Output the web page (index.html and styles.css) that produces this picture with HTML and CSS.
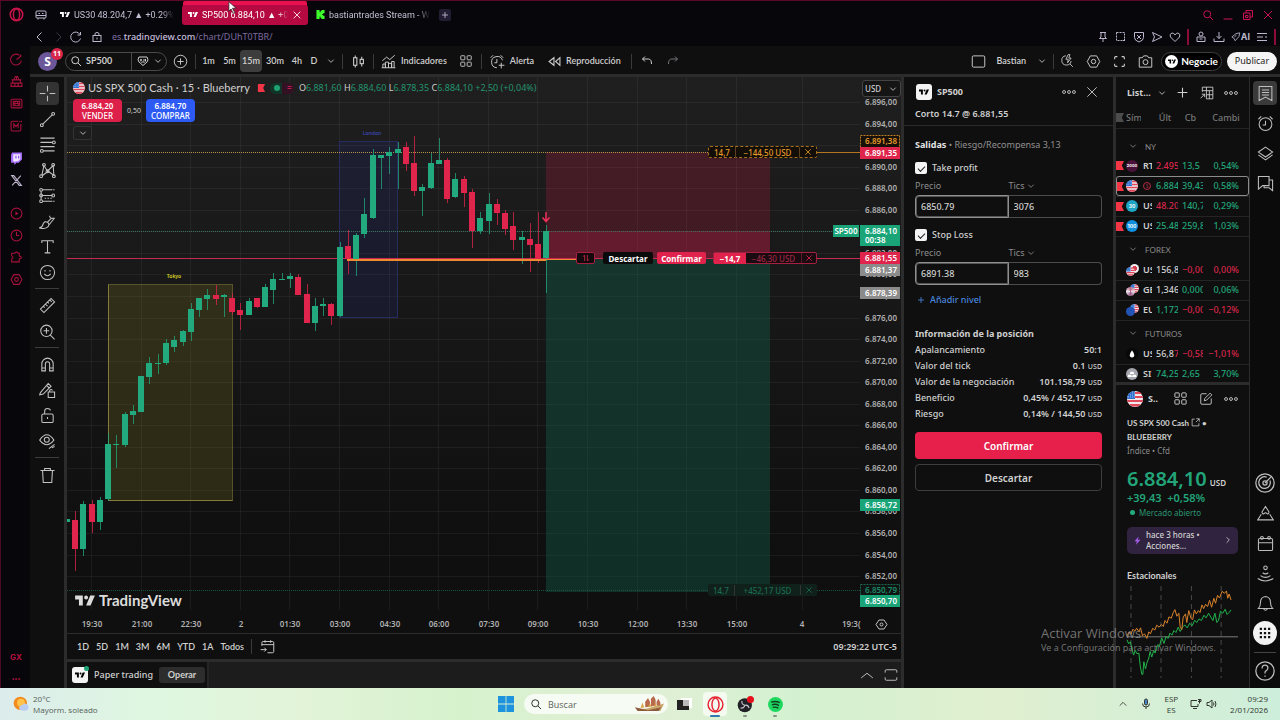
FILE: index.html
```html
<!DOCTYPE html>
<html lang="es">
<head>
<meta charset="utf-8">
<title>SP500 6.884,10</title>
<link rel="stylesheet" href="styles.css">
</head>
<body>
<svg class="defs" aria-hidden="true">
  <symbol id="tv" viewBox="0 0 36 20"><path fill="currentColor" d="M0 1h14v18H7V8H0zM28 19h-8L27.500 1H36zM16.500 4.500a3.500 3.500 0 1 0 7 0a3.500 3.500 0 1 0-7 0"/></symbol>
  <symbol id="chev" viewBox="0 0 24 24"><path d="M4 8l8 8 8-8"/></symbol>
  <symbol id="search" viewBox="0 0 24 24"><circle cx="10.500" cy="10.500" r="7"/><path d="M16 16l6 6"/></symbol>
  <symbol id="plus" viewBox="0 0 24 24"><path d="M12 3v18M3 12h18"/></symbol>
  <symbol id="pluscircle" viewBox="0 0 24 24"><circle cx="12" cy="12" r="10"/><path d="M12 7v10M7 12h10"/></symbol>
  <symbol id="close" viewBox="0 0 24 24"><path d="M4 4l16 16M20 4L4 20"/></symbol>
  <symbol id="dots" viewBox="0 0 24 24"><circle cx="3.500" cy="12" r="2.500"/><circle cx="12" cy="12" r="2.500"/><circle cx="20.500" cy="12" r="2.500"/></symbol>
  <symbol id="grid4" viewBox="0 0 24 24"><rect x="3" y="3" width="7" height="7" rx="1"/><rect x="14" y="3" width="7" height="7" rx="1"/><rect x="3" y="14" width="7" height="7" rx="1"/><rect x="14" y="14" width="7" height="7" rx="1"/></symbol>
  <symbol id="hex" viewBox="0 0 24 24"><path d="M7 3h10l5 9-5 9H7l-5-9z"/><circle cx="12" cy="12" r="3.500"/></symbol>
  <symbol id="full" viewBox="0 0 24 24"><path d="M3 8V5q0-2 2-2h3M16 3h3q2 0 2 2v3M21 16v3q0 2-2 2h-3M8 21H5q-2 0-2-2v-3"/></symbol>
  <symbol id="smile" viewBox="0 0 24 24"><circle cx="12" cy="12" r="10"/><path d="M7.500 14q4.500 5 9 0M8.500 8.500v2M15.500 8.500v2"/></symbol>
  <symbol id="alarm" viewBox="0 0 24 24"><circle cx="12" cy="13" r="9"/><path d="M12 8v6H8M2 6l4-4M22 6l-4-4"/></symbol>
  <symbol id="cal" viewBox="0 0 24 24"><rect x="2" y="5" width="20" height="17" rx="2"/><path d="M2 11h20M8 5h8"/><circle cx="7" cy="4" r="2"/><circle cx="17" cy="4" r="2"/></symbol>
  <symbol id="opera" viewBox="0 0 24 24"><circle cx="12" cy="12" r="10"/><ellipse cx="12" cy="12" rx="5" ry="9"/></symbol>
  <symbol id="flag" viewBox="0 0 9 10"><path fill="#f23645" d="M0 0h9L6.500 5 9 10H0z"/></symbol>
  <symbol id="usa" viewBox="0 0 16 16"><circle cx="8" cy="8" r="8" fill="#f3e9ec"/><path fill="#e0485b" d="M8 1h5l1.500 2H8zM8 5h7.500l.5 2H8zM0 9h16l-.6 2H.6zM2 13h12l-3 2.500H5z"/><path fill="#2d6fd0" d="M8 0v8H0a8 8 0 0 1 8-8"/><path stroke="#cfe2ff" stroke-width=".7" stroke-dasharray="1 1" d="M3 4h5M1 6h7M5 2h3"/></symbol>
</svg>

<main class="browser">
  <nav class="gx" aria-label="Opera GX">
    <div class="gx-home"><svg class="i i15 thick"><use href="#opera"/></svg></div>
    <div class="gx-group">
      <svg class="i i13" viewBox="0 0 24 24"><path d="M17 4a10 10 0 1 0 4 10M12 12l8-6M18 3l3 3"/></svg>
      <svg class="i i13" viewBox="0 0 24 24"><path d="M7 9l3-6h4l3 6M3 9h18M5 9v6M19 9v6M2 15h20v6H2zM9 15v6M15 15v6M12 3v6"/></svg>
      <svg class="i i13" viewBox="0 0 24 24"><rect x="2" y="4" width="20" height="16" rx="2"/><path d="M6 8h12v8H6zM9 8v8M13 8l3 8M6 12h12"/></svg>
      <svg class="i i13" viewBox="0 0 24 24"><path d="M20 9v11q0 2-2 2H4q-2 0-2-2V6q0-2 2-2h11M7 17V9l4 5 4-5v8M18 3v3M21 3v3"/></svg>
    </div>
    <div class="gx-group gap">
      <svg class="i i13" viewBox="0 0 24 24"><path fill="#a970ff" stroke="none" d="M4 1h18v13l-6 6h-4l-4 4v-4H2V5z"/><path fill="#f0e6ff" stroke="none" d="M6 4h13v9l-4 4h-4l-3 2v-2H6z"/><path stroke="#8040e0" d="M11 7v5M16 7v5"/></svg>
      <svg class="i i13 pale" viewBox="0 0 24 24"><path d="M3 3h4l14 18h-4zM20 3L4 21"/></svg>
    </div>
    <div class="gx-group gap">
      <svg class="i i13" viewBox="0 0 24 24"><circle cx="12" cy="12" r="10"/><path fill="currentColor" d="M11 10l3 2-3 2z"/></svg>
      <svg class="i i13" viewBox="0 0 24 24"><circle cx="12" cy="12" r="10"/><path d="M12 5v7h5"/></svg>
      <svg class="i i13" viewBox="0 0 24 24"><path d="M3 4h6q3-4 6 0h2v5q8 3 0 6v5H3v-5q5-3 0-6z"/></svg>
      <svg class="i i13"><use href="#hex"/></svg>
    </div>
    <div class="gx-foot"><span>GX</span><span>•••</span></div>
  </nav>

  <section class="window">
    <header class="tabs">
      <svg class="i i12 pale" viewBox="0 0 24 24"><rect x="2" y="4" width="20" height="14" rx="2"/><path d="M2 13h20M6 18v3M18 18v3M7 9h3M14 9h3"/></svg>
      <button class="tab"><svg class="fav"><use href="#tv"/></svg><span>US30 48.204,7 ▲ +0.29%</span></button>
      <button class="tab active"><svg class="fav"><use href="#tv"/></svg><span>SP500 6.884,10 ▲ +0.04%</span><svg class="i i10"><use href="#close"/></svg></button>
      <button class="tab kick"><svg class="fav" viewBox="0 0 20 20"><path fill="#3dfc2c" d="M1 0h7v5h2V2h2V0h7v7h-3v2h-2v2h2v2h3v7h-7v-2h-2v-3H8v5H1z"/></svg><span>bastiantrades Stream - Watch</span></button>
      <button class="newtab" aria-label="Nueva pestaña"><svg class="i i8 thick"><use href="#plus"/></svg></button>
      <div class="wincontrols">
        <svg class="i i12 thick"><use href="#search"/></svg>
        <svg class="i i12 thick" viewBox="0 0 24 24"><path d="M3 20h18"/></svg>
        <svg class="i i12 thick" viewBox="0 0 24 24"><path d="M3 8h13v13H3zM8 8V3h13v13h-5M7 13h5v4H7z"/></svg>
        <svg class="i i12 thick"><use href="#close"/></svg>
      </div>
    </header>
    <div class="address">
      <svg class="i i12 pale thick" viewBox="0 0 24 24"><path d="M15 3l-9 9 9 9"/></svg>
      <svg class="i i12 dim" viewBox="0 0 24 24"><path d="M9 3l9 9-9 9"/></svg>
      <svg class="i i12 pale thick" viewBox="0 0 24 24"><path d="M20 7a10 10 0 1 0 1 8M21 2v6h-6"/></svg>
      <svg class="i i12 pale lock" viewBox="0 0 24 24"><rect x="4" y="9" width="16" height="12"/><path d="M8 9V6q0-3 4-3t4 3v3M12 13v4"/></svg>
      <a class="url" href="#">es.<b>tradingview.com</b>/chart/DUhT0TBR/</a>
      <div class="addr-icons">
        <svg class="i i12" viewBox="0 0 24 24"><path d="M6 3h12M8 3v9l-3 3h14l-3-3V3M12 15v7"/></svg>
        <svg class="i i12" viewBox="0 0 24 24"><path stroke-dasharray="4 2" d="M3 3h16v16H3zM19 16v6M16 19h6"/></svg>
        <svg class="i i12" viewBox="0 0 24 24"><path d="M3 3h18v10q0 6-9 9-9-3-9-9zM8 8l8 8M16 8l-8 8"/></svg>
        <svg class="i i12" viewBox="0 0 24 24"><path d="M3 3l19 9-19 9 4-9z"/></svg>
        <svg class="i i12" viewBox="0 0 24 24"><path d="M12 21L3 12q-3-6 3-8 4 0 6 4 2-4 6-4 6 2 3 8z"/></svg>
        <i class="bar"></i>
        <svg class="i i12" viewBox="0 0 24 24"><circle cx="12" cy="6" r="4"/><path d="M4 12h16v9H4zM9 16h6"/></svg>
        <svg class="i i12" viewBox="0 0 24 24"><path d="M12 2v13M7 10l5 5 5-5M2 15v6h20v-6"/></svg>
        <span class="ai"><svg class="i i10" viewBox="0 0 24 24"><path d="M2 12l10-8 9-2-2 9-9 10-3-6zM8 12l5-4"/></svg>AI</span>
        <svg class="i i12 thick" viewBox="0 0 24 24"><path d="M2 5h20M2 12h12M18 12h4M2 19h20"/></svg>
        <i class="bar"></i>
      </div>
    </div>

    <div class="toolbar">
      <div class="avatar">S<span class="badge">11</span></div>
      <div class="pill">
        <button class="sym"><svg class="i i12"><use href="#search"/></svg>SP500</button>
        <button class="cmp" aria-label="Comparar"><svg class="i i12" viewBox="0 0 24 24"><path d="M4 4h16q4 6 0 10l-8 7-8-7q-4-4 0-10zM8 8v5M6 10h4M14 8v5M17 8v5M9 16l3-3 3 3"/></svg><svg class="i i8"><use href="#chev"/></svg></button>
      </div>
      <button class="tb w26" aria-label="Añadir"><svg class="i i15"><use href="#pluscircle"/></svg></button>
      <i class="sep"></i>
      <button class="tb w20">1m</button><button class="tb w20">5m</button><button class="tb w22 on">15m</button><button class="tb w26">30m</button><button class="tb w18">4h</button><button class="tb w15">D</button><button class="tb w18" aria-label="Intervalos"><svg class="i i8"><use href="#chev"/></svg></button>
      <i class="sep"></i>
      <button class="tb w26" aria-label="Velas"><svg class="i i13" viewBox="0 0 24 24"><rect x="3" y="5" width="6" height="14"/><path d="M6 1v4M6 19v4M18 3v5M18 16v5"/><rect x="15" y="8" width="6" height="8"/></svg></button>
      <i class="sep"></i>
      <button class="tb ind"><svg class="i i15" viewBox="0 0 24 24"><path d="M3 22v-6h4v6M7 22v-9h5v9M12 22v-7h5v7M17 22v-10h4v10M2 11l7-6 5 4 8-7M1 22h22"/></svg>Indicadores</button>
      <button class="tb w26" aria-label="Plantillas"><svg class="i i14"><use href="#grid4"/></svg></button>
      <i class="sep"></i>
      <button class="tb ale"><svg class="i i15" viewBox="0 0 24 24"><path d="M20 10a9 9 0 1 0-9 12M11 8v6H7M1 6l4-4M21 6l-4-4M18 14v9M14 18h9"/></svg>Alerta</button>
      <button class="tb rep"><svg class="i i13" viewBox="0 0 24 24"><path d="M11 5v14L2 12zM22 5v14l-8-7z"/></svg>Reproducción</button>
      <i class="sep"></i>
      <button class="tb w26" aria-label="Deshacer"><svg class="i i12" viewBox="0 0 24 24"><path d="M8 3L3 8l5 5M3 8h12q6 0 6 10"/></svg></button>
      <button class="tb w26 dim" aria-label="Rehacer"><svg class="i i12" viewBox="0 0 24 24"><path d="M16 3l5 5-5 5M21 8H9q-6 0-6 10"/></svg></button>
      <div class="tb-right">
        <button class="tb w26" aria-label="Diseño"><svg class="i i15" viewBox="0 0 24 24"><rect x="2" y="3" width="20" height="18" rx="2"/></svg></button>
        <button class="tb bas">Bastian<svg class="i i8"><use href="#chev"/></svg></button>
        <i class="sep"></i>
        <button class="tb w26" aria-label="Búsqueda rápida"><svg class="i i14" viewBox="0 0 24 24"><path d="M10 3a8 8 0 1 0 9 9M17 17l5 5M14 1l-4 8h4l-1 6 6-8h-4l2-6z"/></svg></button>
        <button class="tb w26" aria-label="Ajustes"><svg class="i i15"><use href="#hex"/></svg></button>
        <button class="tb w26" aria-label="Pantalla completa"><svg class="i i13"><use href="#full"/></svg></button>
        <button class="tb w26" aria-label="Captura"><svg class="i i15" viewBox="0 0 24 24"><path d="M2 6h5l2-3h6l2 3h5v15H2z"/><circle cx="12" cy="13" r="4"/></svg></button>
        <button class="negocie"><span class="disc"><svg><use href="#tv"/></svg></span>Negocie</button>
        <button class="publicar">Publicar</button>
      </div>
    </div>

    <div class="workspace">
      <aside class="tools">
        <div class="tg g8">
          <button class="on" aria-label="Cruz"><svg class="i i18" viewBox="0 0 24 24"><path d="M12 1v8M12 15v8M1 12h8M15 12h8"/></svg></button>
          <button aria-label="Línea"><svg class="i i18" viewBox="0 0 24 24"><path d="M5 19L19 5"/><circle cx="4" cy="20" r="2"/><circle cx="20" cy="4" r="2"/></svg></button>
          <button aria-label="Fibonacci"><svg class="i i18" viewBox="0 0 24 24"><path d="M2 3h20M2 9h17M2 15h20M6 21h16"/><circle cx="21" cy="9" r="2"/><circle cx="4" cy="21" r="2"/></svg></button>
          <button aria-label="Patrones"><svg class="i i18" viewBox="0 0 24 24"><path d="M4 19L7 5l5 8 8-8 1 14-8-6-8 6"/><circle cx="3" cy="20" r="2"/><circle cx="7" cy="4" r="2"/><circle cx="12" cy="13" r="2"/><circle cx="20" cy="4" r="2"/><circle cx="21" cy="20" r="2"/></svg></button>
          <button aria-label="Previsión"><svg class="i i18" viewBox="0 0 24 24"><path d="M5 4h17M5 12h14M5 20h17M3 6v12" stroke-dasharray="14 1"/><path stroke-dasharray="2 2" d="M8 16h12"/><circle cx="3" cy="4" r="2"/><circle cx="3" cy="12" r="2"/><circle cx="3" cy="20" r="2"/><circle cx="20" cy="12" r="2"/></svg></button>
          <button aria-label="Pincel"><svg class="i i18" viewBox="0 0 24 24"><path d="M1 21q4-1 5-6 2-4 6-2 4 4 0 7-4 3-11 1zM12 13l5-5M14 17l8-10M15 4q0 5 7 3"/></svg></button>
          <button aria-label="Texto"><svg class="i i18" viewBox="0 0 24 24"><path d="M4 7V4h16v3M12 4v17M8 21h8"/></svg></button>
          <button aria-label="Iconos"><svg class="i i18"><use href="#smile"/></svg></button>
        </div>
        <hr>
        <div class="tg g2">
          <button aria-label="Medir"><svg class="i i18" viewBox="0 0 24 24"><path d="M2 17L17 2l5 5L7 22zM6 13l2 2M9 10l3 3M12 7l2 2M15 4l3 3"/></svg></button>
          <button aria-label="Acercar"><svg class="i i18" viewBox="0 0 24 24"><circle cx="10.500" cy="11" r="8"/><path d="M16 17l6 6M10.500 7v8M6.500 11h8"/></svg></button>
        </div>
        <hr>
        <div class="tg g4">
          <button aria-label="Imán"><svg class="i i18" viewBox="0 0 24 24"><path d="M4 21V11a8 8 0 0 1 16 0v10h-5V11q0-3-3-3t-3 3v10zM4 17h5M15 17h5"/></svg></button>
          <button aria-label="Modo dibujo"><svg class="i i18" viewBox="0 0 24 24"><path d="M2 15L13 2l4 4L6 17l-5 1zM11 5l4 4M13 14h9v8h-9zM15 14v-2q2-3 4 0"/></svg></button>
          <button aria-label="Bloquear"><svg class="i i18" viewBox="0 0 24 24"><rect x="4" y="10" width="16" height="12" rx="2"/><path d="M8 10V6q0-4 4-4t4 3M12 14v3"/></svg></button>
          <button aria-label="Ocultar"><svg class="i i18" viewBox="0 0 24 24"><path d="M1 10q10-15 20 0-10 13-20 0zM14 22l8-6M18 21l4-2"/><circle cx="11" cy="9.500" r="3.500"/></svg></button>
        </div>
        <hr>
        <div class="tg g1"><button aria-label="Eliminar"><svg class="i i18" viewBox="0 0 24 24"><path d="M2 5h20M8 5V2h8v3M5 5l1 17h12l1-17"/></svg></button></div>
      </aside>

      <section class="center">
        <div class="chart">
          <svg id="plot" class="plot" viewBox="67 77 834 556" preserveAspectRatio="xMaxYMin slice"></svg>
          <div class="legend">
            <div class="title"><svg class="flag12"><use href="#usa"/></svg><h1>US SPX 500 Cash · 15 · Blueberry</h1><svg class="redflag"><use href="#flag"/></svg><span class="status"><i></i><b>=</b></span>
              <p class="ohlc">O<em>6.881,60</em> H<em>6.884,60</em> L<em>6.878,35</em> C<em>6.884,10</em> <em>+2,50</em> <em>(+0,04%)</em></p></div>
            <div class="trade"><button class="sell"><b>6.884,20</b>VENDER</button><span>0,50</span><button class="buy"><b>6.884,70</b>COMPRAR</button></div>
            <button class="fold" aria-label="Plegar"><svg class="i i8 thick"><use href="#chev"/></svg></button>
          </div>
          <label class="currency"><select aria-label="Moneda"><option>USD</option></select><svg class="i i8"><use href="#chev"/></svg></label>
          <div class="order stop"><span>14,7</span><span>−144,50 USD</span><button aria-label="Cancelar stop"><svg class="i i8 thick"><use href="#close"/></svg></button></div>
          <div class="order entry">
            <button class="swap" aria-label="Invertir"><svg class="i i8" viewBox="0 0 24 24"><path d="M8 21V4M3 8l5-5M16 3v17M21 16l-5 5"/></svg></button><button class="disc-btn">Descartar</button><button class="conf-btn">Confirmar</button>
            <div class="pos"><b>−14,7</b><span>−46,30 USD</span><button aria-label="Cerrar"><svg class="i i8 thick"><use href="#close"/></svg></button></div>
          </div>
          <div class="order profit"><span>14,7</span><span>+452,17 USD</span><button aria-label="Cancelar objetivo"><svg class="i i8 thick"><use href="#close"/></svg></button></div>
          <div class="brand"><svg><use href="#tv"/></svg>TradingView</div>
        </div>
        <div class="ranges">
          <button>1D</button><button>5D</button><button>1M</button><button>3M</button><button>6M</button><button>YTD</button><button>1A</button><button>Todos</button><i class="sep"></i>
          <button aria-label="Ir a"><svg class="i i15" viewBox="0 0 24 24"><path d="M3 11V6q0-2 2-2h15q2 0 2 2v14q0 2-2 2h-8M3 9h19M1 17h9M7 14l3 3-3 3M8 2v4M17 2v4"/></svg></button>
          <time>09:29:22 UTC-5</time>
        </div>
        <div class="dock">
          <div class="paper"><span class="tvbox"><svg><use href="#tv"/></svg><i></i></span><span>Paper trading</span><button>Operar</button></div>
          <div class="dock-right"><svg class="i i14" viewBox="0 0 24 24"><path d="M2 17l10-8 10 8"/></svg><svg class="i i14" viewBox="0 0 24 24"><path d="M2 8V5q0-2 2-2h16q2 0 2 2v3M22 16v3q0 2-2 2H4q-2 0-2-2v-3"/></svg></div>
        </div>
      </section>

      <aside class="ticket">
        <div class="ticket-head">
          <div class="th-row"><span class="tvbox"><svg><use href="#tv"/></svg></span><h2>SP500</h2><svg class="i i14"><use href="#dots"/></svg><svg class="i i14"><use href="#close"/></svg></div>
          <p>Corto 14.7 @ 6.881,55</p>
        </div>
        <form class="ticket-body">
          <p class="exits"><b>Salidas</b> • Riesgo/Recompensa 3,13</p>
          <label class="check"><input type="checkbox" checked>Take profit</label>
          <div class="labels"><label for="tp">Precio</label><label for="tpt">Tics <svg class="i i8 thick"><use href="#chev"/></svg></label></div>
          <div class="fields"><input id="tp" value="6850.79"><input id="tpt" value="3076"></div>
          <label class="check"><input type="checkbox" checked>Stop Loss</label>
          <div class="labels"><label for="sl">Precio</label><label for="slt">Tics <svg class="i i8 thick"><use href="#chev"/></svg></label></div>
          <div class="fields"><input id="sl" value="6891.38"><input id="slt" value="983"></div>
          <button type="button" class="add"><svg class="i i8"><use href="#plus"/></svg>Añadir nivel</button>
          <h3>Información de la posición</h3>
          <dl>
            <div><dt>Apalancamiento</dt><dd>50:1</dd></div>
            <div><dt>Valor del tick</dt><dd>0.1 <small>USD</small></dd></div>
            <div><dt>Valor de la negociación</dt><dd>101.158,79 <small>USD</small></dd></div>
            <div><dt>Beneficio</dt><dd>0,45% / 452,17 <small>USD</small></dd></div>
            <div><dt>Riesgo</dt><dd>0,14% / 144,50 <small>USD</small></dd></div>
          </dl>
          <button type="button" class="primary">Confirmar</button>
          <button type="button" class="secondary">Descartar</button>
        </form>
      </aside>

      <aside class="watch">
        <div class="w-head"><button>List...<svg class="i i8"><use href="#chev"/></svg></button><svg class="i i13"><use href="#plus"/></svg><svg class="i i14" viewBox="0 0 24 24"><path d="M4 10V2h18v20H11M4 8h18M11 2v20M16 8v14M11 15h11M1 21l7-7M3 14h5v5"/></svg><svg class="i i14"><use href="#dots"/></svg></div>
        <table>
          <colgroup><col class="c-flag"><col class="c-ico"><col class="c-sym"><col class="c-last"><col class="c-chg"><col></colgroup>
          <thead><tr><th><svg class="rowflag muted"><use href="#flag"/></svg></th><th colspan="2"><span class="clip">Símb</span></th><th>Últ</th><th>Cb</th><th>Cambi</th></tr></thead>
          <tbody>
            <tr class="group first"><td colspan="6"><svg class="i i8"><use href="#chev"/></svg>NY</td></tr>
            <tr><td><svg class="rowflag"><use href="#flag"/></svg></td><td><span class="coin plum">2000</span></td><td class="s">RTY</td><td class="dn">2.495,1</td><td class="up">13,5</td><td class="up">0,54%</td></tr>
            <tr class="sel"><td><svg class="rowflag"><use href="#flag"/></svg></td><td><svg class="flag12"><use href="#usa"/></svg></td><td class="s"><span class="ring">S</span></td><td class="up">6.884,1</td><td class="up">39,43</td><td class="up">0,58%</td></tr>
            <tr><td><svg class="rowflag"><use href="#flag"/></svg></td><td><span class="coin cyan">30</span></td><td class="s">US30</td><td class="dn">48.204</td><td class="up">140,7</td><td class="up">0,29%</td></tr>
            <tr><td><svg class="rowflag"><use href="#flag"/></svg></td><td><span class="coin blue">100</span></td><td class="s">US100</td><td class="up">25.488</td><td class="up">259,8</td><td class="up">1,03%</td></tr>
            <tr class="group"><td colspan="6"><svg class="i i8"><use href="#chev"/></svg>FOREX</td></tr>
            <tr><td></td><td><span class="pair"><svg><use href="#usa"/></svg><i class="jp"></i></span></td><td class="s">USD</td><td>156,83</td><td class="dn">−0,00</td><td class="dn">0,00%</td></tr>
            <tr><td></td><td><span class="pair"><i class="gb"></i><svg><use href="#usa"/></svg></span></td><td class="s">GBP</td><td>1,3465</td><td class="up">0,000</td><td class="up">0,06%</td></tr>
            <tr><td></td><td><span class="pair"><i class="eu"></i><svg><use href="#usa"/></svg></span></td><td class="s">EUR</td><td class="up">1,1725</td><td class="dn">−0,00</td><td class="dn">−0,12%</td></tr>
            <tr class="group"><td colspan="6"><svg class="i i8"><use href="#chev"/></svg>FUTUROS</td></tr>
            <tr><td></td><td><svg class="flag12" viewBox="0 0 16 16"><circle cx="8" cy="8" r="8" fill="#080808"/><path fill="#fff" d="M8 3q3 4 3 6.500a3 3 0 0 1-6 0Q5 7 8 3"/></svg></td><td class="s">US</td><td>56,8<em class="dn">7</em></td><td class="dn">−0,58</td><td class="dn">−1,01%</td></tr>
            <tr><td></td><td><svg class="flag12" viewBox="0 0 16 16"><circle cx="8" cy="8" r="8" fill="#a5a7ae"/><path fill="#fff" d="M6 5h4l1 3H5zM3 9h4l1 3H2zM9 9h4l1 3H8z"/></svg></td><td class="s">SI1</td><td class="up">74,25</td><td class="up">2,65</td><td class="up">3,70%</td></tr>
          </tbody>
        </table>
        <section class="detail">
          <div class="d-head"><svg class="flag16"><use href="#usa"/></svg><b>S..</b><svg class="i i15"><use href="#grid4"/></svg><svg class="i i14" viewBox="0 0 24 24"><path d="M13 3H5q-2 0-2 2v14q0 2 2 2h14q2 0 2-2v-8M9 15l1-4 9-9 3 3-9 9z"/></svg><svg class="i i14"><use href="#dots"/></svg></div>
          <p class="name">US SPX 500 Cash <svg class="i i9" viewBox="0 0 24 24"><path d="M10 3H3v18h18v-7M14 2h8v8M22 2l-9 9"/></svg> •<br>BLUEBERRY</p>
          <p class="kind">Índice • Cfd</p>
          <p class="price"><b>6.884,10</b> <small>USD</small></p>
          <p class="delta">+39,43&nbsp; +0,58%</p>
          <p class="open"><i></i>Mercado abierto</p>
          <button class="news"><svg class="i i9" viewBox="0 0 24 24"><path fill="#a35be8" stroke="none" d="M15 1L4 14h6l-2 9L20 10h-7z"/></svg><span>hace 3 horas •<br>Acciones...</span><svg class="i i8 thick" viewBox="0 0 24 24"><path d="M8 4l8 8-8 8"/></svg></button>
          <h3>Estacionales</h3>
          <svg class="season" viewBox="50 615 336 280" preserveAspectRatio="none">
            <path class="dash" d="M62 618V895M153 618V895M245 618V895M335 618V895"/>
            <path class="base" d="M50 771H386"/>
            <polyline class="green" points="50,780 55,792 60,786 66,812 70,826 75,812 80,822 86,820 90,858 95,884 98,884 101,846 106,868 110,850 116,835 120,815 125,832 131,812 135,820 142,796 148,800 155,774 162,791 168,770 174,776 180,760 186,766 192,752 198,758 205,742 211,755 218,742 225,735 232,744 240,730 247,738 255,721 261,728 268,717 275,722 283,706 289,714 297,700 304,712 310,722 316,700 322,728 327,722 333,694 340,700 347,688 353,704 359,698 365,690"/>
            <polyline class="orange" points="50,768 56,757 62,763 68,748 74,754 79,745 86,755 91,744 97,768 103,762 110,776 116,756 121,762 128,745 134,751 140,736 147,742 154,734 160,740 165,722 171,730 177,711 184,715 190,698 195,689 201,709 207,700 211,742 216,749 220,712 227,702 231,728 237,692 244,716 249,719 254,690 260,702 266,692 271,698 277,675 282,686 288,673 294,680 300,661 306,682 313,655 318,670 324,646 330,654 338,634 345,640 351,633 355,655 359,642 365,660"/>
          </svg>
        </section>
      </aside>

      <nav class="rail">
        <button class="on" aria-label="Lista"><svg class="i i18" viewBox="0 0 24 24"><path d="M3 2h18v20l-9-5-9 5zM7 7h10M7 10.500h10M7 14h10"/></svg></button>
        <button aria-label="Alertas"><svg class="i i18"><use href="#alarm"/></svg></button>
        <button aria-label="Capas"><svg class="i i18" viewBox="0 0 24 24"><path d="M12 3l10 7-10 7L2 10zM2 14l10 7 10-7"/></svg></button>
        <button aria-label="Chats"><svg class="i i18" viewBox="0 0 24 24"><path d="M2 2h15v13H8l-6 5zM17 7h5v15l-5-4h-7v-3"/></svg></button>
        <span class="grow"></span>
        <button aria-label="Radar"><svg class="i i19" viewBox="0 0 24 24"><circle cx="12" cy="12" r="11"/><path d="M18 9a7 7 0 1 1-4-4M12 12l7-7"/><circle cx="12" cy="12" r="2.500"/></svg></button>
        <button aria-label="Ideas"><svg class="i i18" viewBox="0 0 24 24"><path d="M12 2l5 8q-1 4-3 2-2-2-4 0-2 2-3-2zM6 13l-5 8h22l-5-8"/></svg></button>
        <button aria-label="Calendario"><svg class="i i18"><use href="#cal"/></svg></button>
        <button aria-label="Directos"><svg class="i i18" viewBox="0 0 24 24"><path d="M8 11q4 3 8 0M5 15q7 5 14 0M1 19q11 7 22 0"/><circle cx="12" cy="4" r="2.500"/></svg></button>
        <button aria-label="Notificaciones"><svg class="i i18" viewBox="0 0 24 24"><path d="M2 19q3-3 3-9 0-7 7-8 7 1 7 8 0 6 3 9zM9 19q3 5 6 0"/></svg></button>
        <button class="apps" aria-label="Productos"><svg viewBox="0 0 24 24"><path fill="#111" d="M5 5h3v3H5zm5.500 0h3v3h-3zM16 5h3v3h-3zM5 10.500h3v3H5zm5.500 0h3v3h-3zm5.500 0h3v3h-3zM5 16h3v3H5zm5.500 0h3v3h-3zm5.500 0h3v3h-3z"/></svg></button>
        <hr>
        <button class="help" aria-label="Ayuda"><svg class="i i19" viewBox="0 0 24 24"><circle cx="12" cy="12" r="11"/><path d="M8.500 9q0-4 3.500-4t3.500 3.500q0 2-2 3T12 15M12 17.500v1.500"/></svg></button>
      </nav>
    </div>
  </section>
</main>

<footer class="taskbar">
  <div class="weather"><svg viewBox="0 0 24 24"><circle cx="11" cy="11" r="10" fill="#f28c1e"/><circle cx="12" cy="10" r="6" fill="#ffc24a"/><path fill="#b9cdf3" d="M9 18q1-5 5-4 2-4 6-2 4 2 3 7-1 3-6 3-7 0-8-4"/></svg><p>20°C<br>Mayorm. soleado</p></div>
  <div class="dockapps">
    <svg class="win" viewBox="0 0 16 16"><path fill="#1d93dd" d="M0 0h7.600v7.600H0zM8.400 0H16v7.600H8.400zM0 8.400h7.600V16H0zM8.400 8.400H16V16H8.400z"/></svg>
    <label class="search"><svg class="i i12 thick"><use href="#search"/></svg><input placeholder="Buscar" aria-label="Buscar">
      <svg class="ship" viewBox="0 0 36 18"><path fill="#c9a66b" d="M1 11q4 4 16 2l17-5-4 8H8z"/><path fill="#8d5a3c" d="M3 12l3 4h22l3-4-14 3z"/><path fill="#b86a4a" d="M14 12V6l3-4 2 4v5zM20 11V3l3-3 2 4v6zM26 10V6l2-3 2 4v3z"/><path fill="#dba94d" d="M9 13l2-6 2 5zM17 12l2-4 2 3zM23 11l2-3 1 3z"/></svg></label>
    <svg class="app" viewBox="0 0 16 16"><path fill="#fff" d="M5 2h11v10H5z"/><path fill="#222" d="M1 4h6v6h6v4H1z"/><path fill="#bbb" d="M7 4h6v6H7z"/></svg>
    <span class="app cur"><svg viewBox="0 0 24 24" fill="none" stroke="#e5202e" stroke-width="2"><circle cx="12" cy="12" r="10.500"/><ellipse cx="12" cy="12" rx="5" ry="9"/></svg></span>
    <span class="app run"><svg viewBox="0 0 24 24"><circle cx="11" cy="13" r="10" fill="#222027"/><path fill="none" stroke="#c9c7cf" stroke-width="1.500" d="M11 13q-5-1-4-6M11 13q5-1 6 4M11 13q-1 5-6 4"/><circle cx="19" cy="5" r="5" fill="#e5101c"/></svg></span>
    <span class="app run"><svg viewBox="0 0 24 24"><circle cx="12" cy="12" r="10.500" fill="#1ed760"/><path fill="none" stroke="#123d20" stroke-width="2" d="M6 8.500q7-2 12 1M7 12.500q5-2 10 1M8 16q4-1 8 1"/></svg></span>
  </div>
  <div class="tray">
    <svg class="i i10 thick" viewBox="0 0 24 24"><path d="M4 16l8-8 8 8"/></svg>
    <svg class="i i12" viewBox="0 0 24 24"><rect x="9" y="2" width="6" height="12" rx="3" fill="#4b84c4"/><path d="M5 11q0 7 7 7t7-7M12 18v4"/></svg>
    <p class="lang">ESP<br>ES</p>
    <span class="net"><svg class="i i12" viewBox="0 0 24 24"><path d="M14 5H2v12h14v-5M6 21h8M19 3v8M16 3h6v4h-6"/></svg>
    <svg class="i i12" viewBox="0 0 24 24"><path d="M2 9h4l6-5v16l-6-5H2zM15 9q2 3 0 6M18 6q4 6 0 12"/></svg></span>
    <p class="clock">09:29<br>2/01/2026</p>
  </div>
</footer>

<div class="activate"><p>Activar Windows</p><span>Ve a Configuración para activar Windows.</span></div>
<svg class="cursor" viewBox="0 0 12 18"><path fill="#fff" stroke="#222" d="M1 1v13l3-3 3 6 2-1-3-6h5z"/></svg>
<script src="chart.js"></script>
</body>
</html>
```
FILE: styles.css
```css
* { box-sizing: border-box; }
:root {
  --ui: "Noto Sans", "Open Sans", sans-serif;
  --narrow: Lato, "Noto Sans", sans-serif;
  --up: #22a579;
  --down: #d9264a;
  --line: #2c2c2c;
  --panel: #0f0f0f;
  --text: #d0d0d0;
}
body { margin: 0; height: 100vh; display: flex; flex-direction: column; background: #06060b; color: var(--text); font: 9px/12px var(--ui); overflow: hidden; }
p, h1, h2, h3, dl, dd { margin: 0; font-size: inherit; }
button { background: none; border: 0; padding: 0; color: inherit; font: inherit; display: flex; align-items: center; justify-content: center; }
input, select { font: inherit; color: inherit; margin: 0; }
em { font-style: normal; }
a { color: inherit; text-decoration: none; }
svg { display: block; flex: none; }
.defs { position: absolute; width: 0; height: 0; }
.i { fill: none; stroke: currentColor; stroke-width: 1.5; }
.thick { stroke-width: 2.5; }
.i8 { width: 8px; height: 8px; stroke-width: 2.5; }
.i9 { width: 9px; height: 9px; stroke-width: 2; }
.i10 { width: 10px; height: 10px; stroke-width: 2; }
.i12 { width: 12px; height: 12px; stroke-width: 2; }
.i13 { width: 13px; height: 13px; stroke-width: 2; }
.i14 { width: 14px; height: 14px; }
.i15 { width: 15px; height: 15px; }
.i18 { width: 17px; height: 17px; }
.i19 { width: 20px; height: 20px; }
.pale { color: #bdb6cc; }
.dim { color: #77747c; }
.sep { width: 1px; height: 15px; background: #3a3a3a; flex: none; }
.up { color: var(--up); }
.dn { color: var(--down); }

/* browser frame */
.browser { flex: 1; min-height: 0; display: flex; border-top: 1px solid #5a0a26; }
.gx { width: 30px; flex: none; display: flex; flex-direction: column; align-items: center; color: #a5123b; background: #07060b; border-left: 1px solid #4a0a20; padding-left: 1px; }
.gx-home { padding: 6px 0 31px; color: #c8144a; }
.gx-group { display: flex; flex-direction: column; gap: 9px; }
.gx-group.gap { padding-top: 20px; }
.gx-foot { margin-top: auto; display: flex; flex-direction: column; align-items: center; gap: 10px; padding-bottom: 3px; font: bold 8px/12px Inter, sans-serif; color: #b5123f; }
.gx-foot span:last-child { font-size: 6px; }
.window { flex: 1; min-width: 0; display: flex; flex-direction: column; }
.tabs { height: 27px; display: flex; align-items: center; padding-left: 5px; font: 9px/12px Roboto, sans-serif; color: #c5bed2; }
.tab { height: 20px; width: 130px; padding: 0 8px; gap: 4px; justify-content: flex-start; white-space: nowrap; }
.tabs > .tab:nth-of-type(1) { margin-left: 5px; }
.tab span { flex: 1; overflow: hidden; text-align: left; mask-image: linear-gradient(90deg, #000 88%, transparent); }
.tab .fav { width: 10px; height: 7px; color: #fff; }
.tab.kick .fav { width: 9px; height: 9px; }
.tab.active { width: 126px; background: #b50a41; color: #fff; border-radius: 3px; box-shadow: 0 -5px 0 -1px #e8104f; padding: 0 6px; }
.newtab { width: 12px; height: 12px; margin-left: 1px; background: #221d33; border-radius: 2px; }
.wincontrols { margin-left: auto; display: flex; gap: 8px; padding-right: 6px; color: #c81350; }
.address { height: 18px; display: flex; align-items: center; padding: 0 4px; gap: 6px; font: 9px/14px "Noto Sans", sans-serif; }
.lock { margin-left: 3px; }
.url { color: #7e6b9e; margin-left: 3px; }
.address > .dim { color: #3b3644; }
.url b { font-weight: 500; color: #c8bedb; }
.addr-icons { margin-left: auto; display: flex; align-items: center; gap: 6px; color: #bdb6cc; }
.addr-icons .bar { width: 2px; height: 16px; background: #8a0c37; }
.ai { display: flex; align-items: center; font: bold 9px/12px Inter, sans-serif; }

/* top toolbar */
.toolbar { height: 28px; display: flex; align-items: center; padding: 2px 3px 0 8px; background: var(--panel); font: 600 9px/12px var(--narrow); }
.avatar { position: relative; width: 19px; height: 19px; border-radius: 50%; background: #6b5799; color: #fff; font: bold 12px/19px var(--ui); text-align: center; }
.badge { position: absolute; left: 13px; top: -4px; width: 12px; height: 12px; border-radius: 50%; background: #d92549; font: bold 7px/12px var(--ui); }
.pill { display: flex; margin-left: 8px; width: 102px; height: 19px; border: 1px solid #4a4a4a; border-radius: 10px; }
.sym { width: 66px; gap: 4px; font: bold 9px/12px var(--narrow); justify-content: flex-start; padding-left: 4px; border-right: 1px solid #4a4a4a; }
.cmp { flex: 1; gap: 5px; }
.tb { height: 22px; border-radius: 4px; gap: 5px; white-space: nowrap; }
.tb.on { background: #3d3d3d; }
.w15 { width: 16px; } .w18 { width: 18px; } .w20 { width: 21px; } .w22 { width: 22px; } .w26 { width: 26px; }
.toolbar .w26 { flex: none; }
.toolbar > .sep { margin: 0 2px; }
.ind { margin: 0 6px 0 5px; }
.ale { margin: 0 14px 0 6px; }
.rep { margin-right: 8px; }
.tb-right { margin-left: auto; display: flex; align-items: center; }
.bas { gap: 12px; margin: 0 7px 0 5px; }
.negocie { width: 61px; height: 19px; border: 1px solid #3c3c3c; border-radius: 10px; background: #000; color: #fff; font: bold 10px/12px var(--narrow); gap: 3px; margin: 0 5px 0 3px; }
.disc { width: 13px; height: 13px; border-radius: 50%; background: #fff; color: #000; display: grid; place-items: center; }
.disc svg { width: 8px; height: 5px; }
.publicar { width: 50px; height: 19px; border-radius: 10px; background: #f5f5f5; color: #222; font: 400 9px/12px var(--ui); }

.workspace { flex: 1; min-height: 0; display: grid; grid-template-columns: 34px minmax(0, 1fr) 209px 133px 28px; column-gap: 3px; background: var(--line); border-top: 3px solid var(--line); }
.workspace > * { background: var(--panel); min-height: 0; min-width: 0; }

/* drawing tools */
.tools { padding: 4px 5px 0; color: #c2c2c2; }
.tools button { width: 23px; height: 23px; border-radius: 4px; margin: auto; }
.tools .on { background: #333; }
.tg { display: grid; grid-auto-rows: 1fr; }
.g8 { height: 204px; } .g2 { height: 51px; } .g4 { height: 102px; } .g1 { height: 26px; }
.tools hr { border: 0; border-top: 1px solid #3c3c3c; margin: 3px 0 4px; }

/* chart */
.center { display: flex; flex-direction: column; }
.chart { position: relative; flex: 1; min-height: 0; background: linear-gradient(#1f1f1f, #0f0f0f 86%); overflow: hidden; }
.plot { position: absolute; inset: 0; width: 100%; height: 100%; }
.plot text { font: 600 8px "Noto Sans", sans-serif; fill: #b0b0b0; }
.plot .tag { fill: #fff; }
.legend { position: absolute; left: 6px; top: 4px; display: flex; flex-direction: column; gap: 4px; align-items: flex-start; }
.title { display: flex; align-items: center; height: 14px; }
.title h1 { font: 400 11px/14px var(--narrow); margin: 0 7px 0 3px; white-space: nowrap; }
.flag12 { width: 12px; height: 12px; }
.flag16 { width: 16px; height: 16px; }
.redflag { width: 9px; height: 8px; }
.status { display: flex; align-items: center; gap: 7px; margin: 0 5px 0 4px; color: #b91f55; background: linear-gradient(90deg, #103528 50%, #331022 50%); border-radius: 6px; width: 24px; height: 11px; padding-left: 4px; font-size: 8px; }
.status i { width: 6px; height: 6px; border-radius: 50%; background: #1fa26f; }
.ohlc { font: 9px/12px var(--ui); white-space: pre; }
.ohlc em { color: #23946f; }
.trade { display: flex; align-items: center; gap: 5px; font-size: 7px; }
.trade button { flex-direction: column; width: 49px; height: 23px; border-radius: 4px; color: #fff; font: 500 8px/9px var(--ui); }
.trade button b { font: 600 8px/10px var(--ui); }
.sell { background: #dc2049; } .buy { background: #2c5af2; }
.fold { width: 19px; height: 14px; border: 1px solid #333; border-radius: 2px; }
.currency { position: absolute; right: 0; top: 3px; width: 39px; height: 17px; padding: 0 3px 0 2px; border: 1px solid #444; border-radius: 3px; background: #151515; display: flex; align-items: center; }
.currency select { appearance: none; border: 0; background: none; font: 500 8px/12px var(--ui); padding: 0; flex: 1; min-width: 0; }
.order { position: absolute; display: flex; align-items: center; font: 500 8px/11px var(--ui); white-space: nowrap; }
.stop, .profit { right: 84px; width: 109px; height: 12px; border: 1px dashed #a86f1b; background: #130e08; color: #e59a2a; border-radius: 2px; }
.stop { top: 69px; }
.profit { top: 507px; border: 0; background: #10201b; color: #1b6b4f; }
.order > span:first-child { width: 27px; text-align: center; border-right: 1px solid #5b4320; }
.order > span:nth-child(2) { flex: 1; text-align: center; }
.stop button, .profit button { width: 17px; border-left: 1px solid #5b4320; height: 10px; }
.order.profit > span:first-child, .profit button { border-color: #333; }
.entry { right: 84px; top: 175px; height: 12px; gap: 4px; }
.entry > button { height: 12px; border-radius: 2px; font-weight: bold; color: #fff; }
.entry .swap { width: 19px; border: 1px solid #a32041; background: #120a0d; color: #d2294c; margin-right: 4px; }
.entry .disc-btn { width: 50px; background: #0b0b0b; }
.entry .conf-btn { width: 49px; background: #e0234c; margin-right: 3px; }
.pos { width: 104px; height: 12px; display: flex; align-items: center; border: 1px solid #a32041; border-radius: 2px; background: #190b10; color: #9f2744; }
.pos b { width: 32px; line-height: 11px; background: #e0234c; color: #fff; text-align: center; }
.pos span { flex: 1; text-align: center; }
.pos button { width: 15px; height: 10px; border-left: 1px solid #5b1a2c; color: #d2294c; }
.brand { position: absolute; left: 8px; top: 514px; display: flex; align-items: center; gap: 4px; font: 700 15px/18px var(--narrow); color: #dcdcdc; }
.brand svg { width: 20px; height: 11px; }
.ranges { height: 26px; display: flex; align-items: center; padding: 0 4px 0 10px; gap: 7px; border-top: 1px solid #2c2c2c; font: 600 9px/12px var(--narrow); background: var(--panel); }
.ranges .sep { margin: 0 1px 0 0; }
.ranges time { margin-left: auto; font: 600 9px/12px var(--ui); }
.dock { height: 29px; display: flex; justify-content: space-between; background: #1c1c1c; border-top: 3px solid var(--line); }
.paper { display: flex; align-items: center; gap: 6px; width: 142px; padding-left: 5px; background: #101010; border-right: 2px solid #262626; font: 500 9px/12px var(--ui); white-space: nowrap; }
.paper button { width: 46px; height: 16px; border-radius: 3px; background: #2d2d2d; font: 700 9px/12px var(--narrow); }
.tvbox { position: relative; width: 16px; height: 16px; border-radius: 3px; background: #f3f3f3; color: #000; display: grid; place-items: center; flex: none; }
.tvbox svg { width: 10px; height: 6px; }
.tvbox i { position: absolute; right: -1px; top: -1px; width: 5px; height: 5px; border-radius: 50%; background: #1ba476; }
.dock-right { display: flex; align-items: center; gap: 10px; padding-right: 3px; }

/* order ticket */
.ticket-head { padding: 6px 11px 5px; border-bottom: 1px solid #2a2a2a; font-weight: 600; }
.th-row { display: flex; align-items: center; gap: 9px; height: 18px; padding-right: 3px; }
.th-row .tvbox { margin-left: 1px; }
.th-row h2 { flex: 1; margin-left: -4px; font-size: 9px; }
.ticket-head p { margin-top: 7px; }
.ticket-body { padding: 12px 11px 0; display: flex; flex-direction: column; }
.exits { color: #8f8f8f; line-height: 13px; }
.exits b { color: #e4e4e4; }
.check { display: flex; align-items: center; gap: 5px; height: 14px; margin-top: 10px; font-weight: 500; }
.check input { appearance: none; width: 12px; height: 12px; border-radius: 2px; background: #f4f4f4; display: grid; place-items: center; }
.check input::after { content: ""; width: 6px; height: 3px; border: solid #222; border-width: 0 0 1px 1px; rotate: -45deg; }
.labels, .fields { display: grid; grid-template-columns: 1fr 1fr; }
.labels { color: #8c8c8c; height: 14px; align-items: center; margin: 4px 0 2px; }
.labels label { display: flex; align-items: center; gap: 3px; }
.fields input { width: 100%; height: 23px; border: 1px solid #4c4c4c; border-radius: 0 4px 4px 0; background: var(--panel); padding: 0 5px; border-left-width: 0; font-weight: 500; }
.fields input:first-child { border: 1px solid #8f8f8f; box-shadow: 0 0 0 1px #555 inset; border-radius: 4px 0 0 4px; }
.add { align-self: flex-start; color: #4a85dc; gap: 5px; margin: 9px 0 0 2px; font-weight: 500; }
.ticket-body h3 { margin: 21px 0 2px; font-weight: bold; line-height: 13px; }
dl div { display: flex; justify-content: space-between; height: 16px; align-items: center; }
dt { font-weight: 500; }
dd { font-weight: 600; }
dd small { font-size: 7px; font-weight: 500; }
.primary, .secondary { height: 27px; border-radius: 4px; font: 600 10px/14px var(--ui); }
.primary { background: #e61f4b; color: #fff; margin: 10px 0 5px; }
.secondary { border: 1px solid #3d3d3d; }

/* watchlist */
.watch { display: flex; flex-direction: column; overflow: hidden; }
.w-head { height: 31px; display: flex; align-items: center; justify-content: space-between; padding: 0 11px; }
.w-head button { gap: 7px; font-weight: bold; }
table { table-layout: fixed; width: 100%; border-collapse: collapse; font: 9px/12px var(--ui); }
.c-flag { width: 10px; } .c-ico { width: 17px; } .c-sym { width: 9px; } .c-last { width: 26px; } .c-chg { width: 25px; }
th, td { height: 20px; padding: 0; text-align: left; overflow: hidden; white-space: nowrap; font-weight: 500; border-bottom: 1px solid #242424; }
td:nth-child(4) { padding-left: 4px; }
td:nth-child(5) { padding-left: 4px; }
th:nth-child(n+3), th:last-child { text-align: center; }
th { color: #777; }
td:last-child { text-align: right; padding-right: 10px; }
.clip { display: block; width: 15px; overflow: hidden; }
.rowflag { width: 8px; height: 9px; }
.muted { filter: grayscale(1) brightness(.8); }
.group td { height: 24px; border: 0; text-align: left; color: #8a8a8a; font: 8px/12px var(--narrow); padding: 4px 0 0 13px; }
.group.first td { height: 28px; padding-top: 9px; }
.group svg { display: inline-block; margin-right: 8px; }
.sel { outline: 1px solid #8c8c8c; outline-offset: -1px; border-radius: 3px; }
.s { font-weight: 600; }
.coin { display: block; width: 12px; height: 12px; border-radius: 50%; color: #fff; font: bold 5px/12px Inter, sans-serif; text-align: center; }
.plum { background: #4a1238; font-size: 4px; } .cyan { background: #20a4c4; } .blue { background: #1290e0; }
.ring { display: block; width: 8px; height: 8px; border: 1px solid #b52a45; border-radius: 50%; color: #b52a45; font: 5px/6px var(--ui); text-align: center; }
.pair { position: relative; display: block; width: 13px; height: 12px; }
.pair > * { position: absolute; width: 9px; height: 9px; border-radius: 50%; right: 0; top: 0; }
.pair > :first-child { left: 0; right: auto; top: 3px; z-index: 1; }
.jp { background: radial-gradient(#d83b4c 35%, #eee 38%); }
.gb { background: conic-gradient(#b76a86, #e8d8e4, #9b5a88, #efe3ec, #b76a86); }
.eu { background: #2354b5; }

.detail { border-top: 3px solid var(--line); flex: 1; padding: 6px 11px 0; margin-top: -3px; min-height: 0; background: var(--panel); z-index: 1; }
.d-head { display: flex; align-items: center; gap: 11px; height: 16px; margin-bottom: 9px; }
.d-head b { margin: 0 auto 0 -6px; }
.name { font: 700 8px/14px var(--narrow); }
.name svg { display: inline-block; vertical-align: -1px; }
.kind { color: #8a8a8a; font-size: 8px; line-height: 14px; }
.price { margin-top: 9px; display: flex; align-items: baseline; gap: 3px; line-height: 24px; white-space: nowrap; }
.price b { color: var(--up); font-size: 20px; font-weight: 600; }
.price small { font-size: 8px; font-weight: 600; line-height: 12px; }
.delta { color: var(--up); font: 600 11px/14px var(--ui); }
.open { display: flex; align-items: center; gap: 4px; padding-left: 3px; color: #2a936f; font-size: 8px; line-height: 15px; white-space: nowrap; }
.open i { width: 5px; height: 5px; border-radius: 50%; background: #22ab7d; }
.news { width: 100%; height: 27px; margin: 7px 0 15px; padding: 0 6px; gap: 4px; border-radius: 5px; background: #30233f; font: 500 8px/11px var(--ui); text-align: left; }
.news span { flex: 1; }
.detail h3 { font: 700 9px/13px var(--narrow); }
.season { width: 100%; height: 93px; margin-top: 3px; fill: none; stroke-width: 1; overflow: visible; }
.season * { vector-effect: non-scaling-stroke; }
.dash { stroke: #4a4a4a; stroke-dasharray: 5 4; }
.base { stroke: #7d7d7d; }
.green { stroke: #21b34b; }
.orange { stroke: #d9822b; }

/* right rail */
.workspace > .rail { display: flex; flex-direction: column; align-items: center; padding: 4px 0 5px; color: #bdbdbd; background: #0b0b0b; margin-left: -2px; }
.rail button { width: 24px; height: 24px; border-radius: 4px; margin-bottom: 6px; flex: none; }
.rail .on { background: #3a3a3a; }
.grow { flex: 1; }
.rail .apps { background: #f2f2f2; border-radius: 50%; margin-bottom: 5px; }
.apps svg { width: 18px; height: 18px; }
.rail hr { width: 22px; border: 0; border-top: 1px solid #444; margin: 2px 0 6px; }
.rail .help { margin-bottom: 0; }

/* taskbar */
.taskbar { height: 32px; flex: none; display: flex; align-items: center; justify-content: space-between; color: #30352f; background: linear-gradient(90deg, #dcecec, #dff7e0 12%, #e2f3d8 24%, #d6f2cd 36%, #e2efd6 50%, #d3f1d0 62%, #e0efcf 78%, #cdeedb); font: 8px/11px "Open Sans", sans-serif; }
.weather { display: flex; gap: 4px; align-items: center; padding-left: 13px; color: #555c57; flex: 1; }
.weather svg { width: 16px; height: 16px; }
.dockapps { display: flex; align-items: center; gap: 8px; padding-left: 4px; }
.win { width: 16px; height: 16px; margin-right: 2px; }
.search { display: flex; align-items: center; width: 144px; height: 20px; border-radius: 10px; background: #f6fbf3; padding: 0 2px 0 6px; gap: 6px; }
.search input { border: 0; background: none; width: 80px; padding: 0; flex: 1; min-width: 0; font-size: 9px; outline: 0; }
.search input::placeholder { color: #5c645c; }
.ship { width: 34px; height: 17px; }
.app { width: 24px; height: 24px; display: grid; place-items: center; border-radius: 4px; position: relative; }
svg.app { padding: 4px; margin: 0 -1px 0 -4px; }
.app svg { width: 17px; height: 17px; }
.dockapps > .run { margin-left: -2px; }
.cur { background: #f4faf0; }
.cur::after, .run::after { content: ""; position: absolute; bottom: -1px; width: 10px; height: 2px; border-radius: 1px; background: #2f78b0; }
.run::after { width: 4px; background: #8a928a; }
.tray { flex: 1; display: flex; align-items: center; justify-content: flex-end; gap: 12px; padding-right: 12px; }
.lang { text-align: center; }
.net { display: flex; gap: 4px; }
.clock { text-align: right; }

.activate { position: absolute; z-index: 2; right: 55px; top: 625px; width: 184px; color: rgba(160, 160, 160, .7); font: 9px/12px "Noto Sans", sans-serif; white-space: nowrap; }
.activate p { font: 13px/17px "Open Sans", sans-serif; }
.cursor { position: absolute; left: 228px; top: 1px; width: 9px; height: 13px; }
```
FILE: chart.js
```js
// Each candle: [up, body top, body bottom, wick top, wick bottom]
const candles = [
  [0,520,549,511,571],[1,504,549,501,556],[0,504,522,500,533],[1,500,522,497,530],[1,444,499,433,501],
  [1,444,445,435,468],[1,414,445,412,447],[1,411,415,405,424],[1,376,412,376,412],[1,363,377,357,384],
  [1,363,364,354,374],[1,343,363,339,365],[1,340,347,336,352],[1,331,342,330,346],[1,309,332,303,341],
  [1,298,310,298,317],[1,295,299,289,310],[0,295,299,285,305],[1,295,297,294,317],[0,298,312,293,315],
  [0,310,315,303,330],[1,301,315,298,315],[0,298,307,298,308],[1,287,307,284,307],[1,279,290,273,304],
  [1,279,280,273,280],[1,276,279,273,288],[0,277,295,274,295],[0,294,323,284,323],[1,306,323,298,331],
  [1,304,306,298,316],[0,304,316,303,325],[1,247,316,242,317],[0,246,259,230,274],[1,235,259,233,276],
  [1,214,234,198,238],[1,155,218,149,219],[1,155,158,155,189],[1,152,156,147,174],[1,149,153,142,189],
  [0,147,164,142,171],[0,163,191,136,196],[1,187,191,184,216],[1,163,188,153,189],[1,160,164,138,164],
  [0,160,199,158,203],[1,179,197,173,198],[0,179,193,176,207],[0,192,231,189,248],[1,218,231,212,234],
  [1,204,221,193,234],[0,204,213,199,225],[0,213,229,210,235],[0,226,240,212,250],[1,237,240,231,264],
  [0,239,245,223,272],[0,244,259,212,263],[1,231,258,225,293]
];
const UP = "#22a97d", DOWN = "#e0254c";
const out = [];
const line = (x1, y1, x2, y2, stroke, extra = "") =>
  out.push(`<line x1="${x1}" y1="${y1}" x2="${x2}" y2="${y2}" stroke="${stroke}" ${extra}/>`);
const rect = (x, y, w, h, fill, extra = "") =>
  out.push(`<rect x="${x}" y="${y}" width="${w}" height="${h}" fill="${fill}" ${extra}/>`);
const text = (x, y, s, extra = "") => out.push(`<text x="${x}" y="${y}" ${extra}>${s}</text>`);

// grid and axes
const times = ["19:30","21:00","22:30","2","01:30","03:00","04:30","06:00","07:30","09:00","10:30","12:00","13:30","15:00"];
times.forEach((t, i) => {
  const x = Math.round(91 + i * 49.6);
  line(x + .5, 77, x + .5, 610, "#fff", 'stroke-opacity=".05"');
  text(x + 1, 627, t, 'text-anchor="middle"');
});
line(802.5, 77, 802.5, 610, "#fff", 'stroke-opacity=".05"');
text(802, 627, "4", 'text-anchor="middle"');
text(842, 627, "19:3(");
for (let i = 0; i < 23; i++) {
  const y = Math.round(102 + i * 21.55);
  line(67, y + .5, 860, y + .5, "#fff", 'stroke-opacity=".05"');
  text(897, y + 3, `6.${896 - i * 2},00`, 'text-anchor="end"');
}
out.push('<g fill="none" stroke="#c4c4c4"><path d="M879 620h5l3 4.500-3 4.500h-5l-3-4.500z"/><circle cx="881.500" cy="624.500" r="1.500"/></g>');

// sessions
rect(108.5, 284.5, 124, 216, "#8f8420", 'fill-opacity=".22" stroke="#8f873e" stroke-dasharray="1 1"');
out.push('<path d="M108.500 284.500V500.500H232.500" fill="none" stroke="#857c3c"/>');
text(174, 278, "Tokyo", 'text-anchor="middle" style="font-size:5px;fill:#d9d326"');
rect(339.5, 141.5, 58, 176, "#2432a0", 'fill-opacity=".16" stroke="#262c60"');
text(372, 135, "London", 'text-anchor="middle" style="font-size:5px;fill:#3a44b0"');

// short position
rect(546, 152, 224, 106, "#e0204f", 'fill-opacity=".2"');
rect(546, 231, 224, 27, "#e0204f", 'fill-opacity=".22"');
rect(546, 259, 224, 333, "#13604a", 'fill-opacity=".42"');

// price lines
line(67, 152.5, 709, 152.5, "#b5914a", 'stroke-dasharray="1 1"');
line(817, 152.5, 861, 152.5, "#b5761f");
line(67, 231.5, 834, 231.5, "#37705f", 'stroke-dasharray="1 1"');
line(67, 258.5, 861, 258.5, "#c92850");
line(67, 590.5, 861, 590.5, "#185341", 'stroke-dasharray="1 1"');

candles.forEach(([up, top, bottom, high, low], i) => {
  const x = Math.round(75 + i * 8.27), color = up ? UP : DOWN;
  rect(x, high, 1, low - high, color, 'fill-opacity=".75"');
  rect(x - 3, top, 6, Math.max(1, bottom - top), color);
});
rect(67, 519, 3, 3, UP);
rect(347, 259, 199, 2, "#ee8a32");
rect(546, 259, 40, 1, "#ee8a32");
out.push('<path d="M546 212v9M542.500 217.500l3.500 4 3.500-4" fill="none" stroke="#f0305a" stroke-width="1.500"/>');

// price tags
const tag = (y, s, fill, h = 12) => {
  rect(860, y, 40, h, fill);
  text(897, y + 9, s, 'text-anchor="end" class="tag"');
};
rect(860.5, 135.5, 39, 12, "#17110a", 'stroke="#c1801f" stroke-dasharray="2 1"');
text(897, 144, "6.891,38", 'text-anchor="end" style="fill:#e59a2a"');
tag(147, "6.891,35", "#e0254c");
rect(833, 225, 26, 12, "#1aa579");
text(846, 234, "SP500", 'text-anchor="middle" class="tag"');
tag(225, "6.884,10", "#1aa579", 21);
text(865, 243, "00:38", 'class="tag"');
tag(252, "6.881,55", "#e0254c");
tag(264, "6.881,37", "#8b8b8b");
tag(287, "6.878,39", "#8b8b8b");
tag(499, "6.858,72", "#1aa579");
rect(860.5, 584.5, 39, 11, "#0f1513", 'stroke="#1d6650" stroke-dasharray="2 1"');
text(897, 593, "6.850,79", 'text-anchor="end" style="fill:#1d8867"');
tag(595, "6.850,70", "#1aa579");

document.getElementById("plot").innerHTML = out.join("");
```
